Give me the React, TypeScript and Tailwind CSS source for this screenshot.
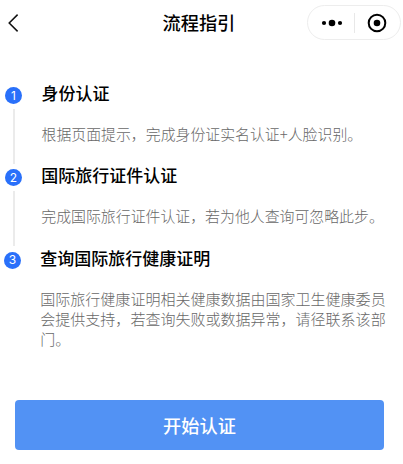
import clsx from 'clsx'

const steps = [
  {
    title: '身份认证',
    text: '根据页面提示，完成身份证实名认证+人脸识别。',
    row: 'h-[82px] pl-[5px]',
    content: 'pl-[19.5px]',
    body: 'mt-[18.5px] text-[14.9px]',
  },
  {
    title: '国际旅行证件认证',
    text: '完成国际旅行证件认证，若为他人查询可忽略此步。',
    row: 'h-[82.5px] pl-[5px]',
    content: 'pl-[19.3px]',
    body: 'mt-[19px] text-[14.9px]',
  },
  {
    title: '查询国际旅行健康证明',
    text: '国际旅行健康证明相关健康数据由国家卫生健康委员会提供支持，若查询失败或数据异常，请径联系该部门。',
    row: 'h-[104.5px] pl-[4px]',
    content: 'pl-[19.3px]',
    body: 'mt-[19.2px] text-[15.03px]',
  },
]

function Header() {
  return (
    <header className="flex h-[45px] items-center pl-[8px] pr-[2px]">
      <button aria-label="返回" className="w-[154.5px]">
        <svg width="11" height="18" viewBox="0 0 11 18" fill="none">
          <path d="M9.6 0.6 1.2 9l8.4 8.4" stroke="#111" strokeWidth="1.5" />
        </svg>
      </button>
      <h1 className="text-[18.2px] font-medium text-black">流程指引</h1>
      <div className="ml-auto flex h-[35px] w-[94px] items-center rounded-full border border-[#ededed]">
        <button aria-label="更多" className="flex w-[46px] items-center justify-center pl-[2px]">
          <svg width="22" height="8" viewBox="0 0 22 8" fill="#000">
            <circle cx="3" cy="4" r="2.1" />
            <circle cx="11" cy="4" r="3.3" />
            <circle cx="19" cy="4" r="2.1" />
          </svg>
        </button>
        <span className="h-[20px] w-px bg-[#e8e8e8]" />
        <button aria-label="关闭" className="flex flex-1 items-center justify-center pr-px">
          <svg width="20" height="20" viewBox="0 0 20 20">
            <circle cx="10" cy="10" r="8.3" fill="none" stroke="#000" strokeWidth="2" />
            <circle cx="10" cy="10" r="3.3" />
          </svg>
        </button>
      </div>
    </header>
  )
}

export default function App() {
  return (
    <main className="flex h-[464px] w-[403px] flex-col overflow-hidden bg-white font-['Noto_Sans_CJK_SC','Noto_Sans',sans-serif]">
      <Header />
      <ol className="mt-[36px]">
        {steps.map((step, i) => (
          <li key={step.title} className={clsx('flex', step.row)}>
            <div className="flex w-[17px] shrink-0 flex-col items-center pt-[6px]">
              <span className="flex size-[17px] shrink-0 items-center justify-center rounded-full bg-[#2970fa] font-['Inter',sans-serif] text-[12px] leading-none text-white">
                {i + 1}
              </span>
              {i < steps.length - 1 && (
                <span className="mt-[5px] h-[55px] w-[2px] shrink-0 bg-[#ebebeb]" />
              )}
            </div>
            <div className={step.content}>
              <h2 className="text-[17px] font-medium leading-[24px] text-black">
                {step.title}
              </h2>
              <p className={clsx('w-[347px] font-light leading-[20.3px] text-[#686868]', step.body)}>
                {step.text}
              </p>
            </div>
          </li>
        ))}
      </ol>
      <button className="ml-[15px] mt-[50px] h-[50px] w-[369px] rounded-[4px] bg-[#5292f4] pt-[2px] text-[18.2px] font-medium text-white">
        开始认证
      </button>
    </main>
  )
}
